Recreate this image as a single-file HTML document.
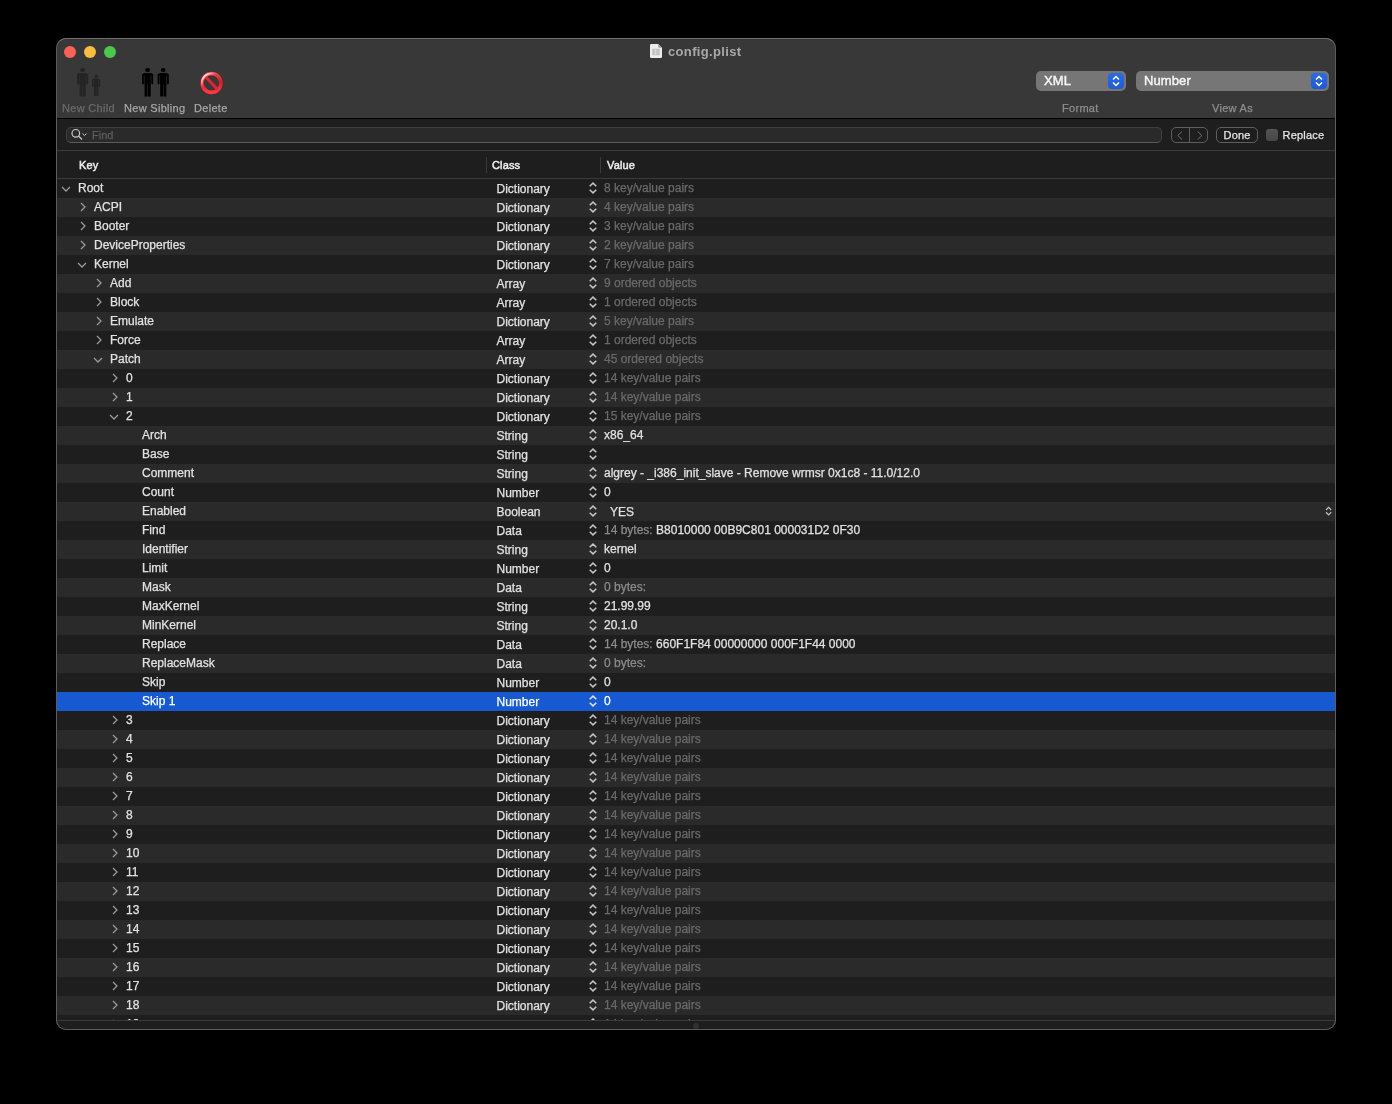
<!DOCTYPE html>
<html><head><meta charset="utf-8">
<style>
*{margin:0;padding:0;box-sizing:border-box}
html,body{width:1392px;height:1104px;background:#000;overflow:hidden;font-family:"Liberation Sans",sans-serif}
#win div{-webkit-text-stroke:0.25px currentColor}
#win{will-change:transform;position:absolute;left:56px;top:38px;width:1280px;height:992px;border-radius:10px;overflow:hidden;background:#1e1e1e}
#winb{position:absolute;left:56px;top:38px;width:1280px;height:992px;border-radius:10px;border:1px solid #5d5d5d;border-top-color:#717171;border-bottom-color:#5a5a5a;pointer-events:none}
.abs{position:absolute}
#tb{position:absolute;left:0;top:0;width:1280px;height:80px;background:#383838}
#tbl{position:absolute;left:0;top:80px;width:1280px;height:1px;background:#000}
.tl{position:absolute;top:8px;width:12px;height:12px;border-radius:50%}
.title{position:absolute;top:6px;left:612px;font-size:13px;letter-spacing:0.35px;font-weight:bold;color:#a8a8a8;line-height:16px;white-space:nowrap;-webkit-text-stroke:0 !important}
.tlab{position:absolute;top:64px;font-size:11px;letter-spacing:0.3px;line-height:12px;color:#a6a6a6;white-space:nowrap}
.pop{position:absolute;top:33px;height:20px;border-radius:5px;background:#767676}
.pop .t{position:absolute;left:8px;top:0.5px;font-size:13px;line-height:17px;color:#f4f4f4;white-space:nowrap;letter-spacing:0.1px;-webkit-text-stroke:0.45px currentColor !important}
.pop .b{position:absolute;right:2px;top:2px;width:16px;height:16px;border-radius:4px;background:linear-gradient(#2c6be4,#1f5ad6)}
.pop .b svg{display:block}
#find{position:absolute;left:0;top:81px;width:1280px;height:31px;background:#1e1e1e}
.sf{position:absolute;left:10px;top:89px;width:1096px;height:16px;border-radius:5px;background:#2a2a2a;border:1px solid #3e3e3e;border-bottom-color:#5a5a5a}
.btn{position:absolute;top:89px;height:16px;border-radius:5px;border:1px solid #5e5e5e;background:#1e1e1e}
.hline{position:absolute;left:0;width:1280px;height:1px}
.hd{position:absolute;top:121px;font-size:11px;font-weight:normal;color:#ececec;line-height:13px;white-space:nowrap;letter-spacing:0.15px;-webkit-text-stroke:0.5px currentColor !important}
.hsep{position:absolute;top:119px;width:1px;height:16px;background:#3a3a3a}
.row{position:absolute;left:0;width:1280px;height:19px}
.k{position:absolute;top:0;font-size:12px;line-height:19px;color:#e2e2e2;white-space:nowrap}
.k.sel{color:#fff}
.gray{color:#6a6a6a}
.dg{color:#8c8c8c}
.chr{position:absolute;top:4px;width:8px;height:10px}
.chd{position:absolute;top:6px;width:10px;height:8px}
.ch{display:block}
.st{position:absolute;top:1px;width:10px;height:15px}
.st svg{display:block}
.st2{position:absolute;top:3px}
.st2 svg{display:block}
</style></head><body>
<div id="win">
 <div id="tb"></div>
 <div id="tbl"></div>
 <div class="abs" style="left:0;top:1px;width:1280px;height:1px;background:#333"></div>
 <div class="tl" style="left:8px;background:#fc6058"></div>
 <div class="tl" style="left:28px;background:#f7bd3e"></div>
 <div class="tl" style="left:48px;background:#4bc94c"></div>
 <svg class="abs" style="left:594px;top:6px" width="12" height="14" viewBox="0 0 12 14"><path d="M1.3 0 L8.2 0 L12 3.8 L12 12.7 Q12 14 10.7 14 L1.3 14 Q0 14 0 12.7 L0 1.3 Q0 0 1.3 0 Z" fill="#ededed"/><path d="M8.2 0 L8.2 2.8 Q8.2 3.8 9.2 3.8 L12 3.8 Z" fill="#9c9c9c"/><rect x="2.2" y="4.8" width="7.6" height="6.4" rx="0.6" fill="#c4c4c4"/><rect x="5.2" y="4.8" width="1" height="6.4" fill="#dcdcdc"/></svg>
 <div class="title">config.plist</div>
 <svg class="abs" style="left:0;top:0" width="300" height="80">
  <g transform="translate(21,30) scale(1.0000)" fill="#242424"><ellipse cx="5.6" cy="2" rx="2.4" ry="1.95"/><rect x="0.9" y="5.3" width="9.4" height="2.2" rx="1"/><rect x="0" y="5.9" width="1.9" height="10.3" rx="0.6"/><rect x="9.3" y="5.9" width="1.9" height="10.3" rx="0.6"/><rect x="2.4" y="5.3" width="6.4" height="11.2"/><rect x="2.6" y="16" width="2.8" height="12.5"/><rect x="5.9" y="16" width="2.8" height="12.5"/></g>
  <g transform="translate(36,36.8) scale(0.7368)" fill="#242424"><ellipse cx="5.6" cy="2" rx="2.4" ry="1.95"/><rect x="0.9" y="5.3" width="9.4" height="2.2" rx="1"/><rect x="0" y="5.9" width="1.9" height="10.3" rx="0.6"/><rect x="9.3" y="5.9" width="1.9" height="10.3" rx="0.6"/><rect x="2.4" y="5.3" width="6.4" height="11.2"/><rect x="2.6" y="16" width="2.8" height="12.5"/><rect x="5.9" y="16" width="2.8" height="12.5"/></g>
  <g transform="translate(86,30) scale(1.0000)" fill="#000"><ellipse cx="5.6" cy="2" rx="2.4" ry="1.95"/><rect x="0.9" y="5.3" width="9.4" height="2.2" rx="1"/><rect x="0" y="5.9" width="1.9" height="10.3" rx="0.6"/><rect x="9.3" y="5.9" width="1.9" height="10.3" rx="0.6"/><rect x="2.4" y="5.3" width="6.4" height="11.2"/><rect x="2.6" y="16" width="2.8" height="12.5"/><rect x="5.9" y="16" width="2.8" height="12.5"/></g>
  <g transform="translate(101.6,30) scale(1.0000)" fill="#000"><ellipse cx="5.6" cy="2" rx="2.4" ry="1.95"/><rect x="0.9" y="5.3" width="9.4" height="2.2" rx="1"/><rect x="0" y="5.9" width="1.9" height="10.3" rx="0.6"/><rect x="9.3" y="5.9" width="1.9" height="10.3" rx="0.6"/><rect x="2.4" y="5.3" width="6.4" height="11.2"/><rect x="2.6" y="16" width="2.8" height="12.5"/><rect x="5.9" y="16" width="2.8" height="12.5"/></g>
  <defs><linearGradient id="rg" x1="0" y1="0" x2="0" y2="1"><stop offset="0" stop-color="#e8424b"/><stop offset="0.45" stop-color="#c9232d"/><stop offset="1" stop-color="#ff3945"/></linearGradient>
  <linearGradient id="hl" x1="0.1" y1="0.1" x2="0.8" y2="0.8"><stop offset="0" stop-color="#fff" stop-opacity="0.95"/><stop offset="0.4" stop-color="#fff" stop-opacity="0"/></linearGradient></defs>
  <circle cx="155.5" cy="45" r="9.4" fill="none" stroke="#7a0e14" stroke-width="4.6" opacity="0.55"/>
  <line x1="149.4" y1="38.599999999999994" x2="161.6" y2="51.400000000000006" stroke="#7a0e14" stroke-width="4.1" opacity="0.55"/>
  <circle cx="155.5" cy="45" r="9.4" fill="none" stroke="url(#rg)" stroke-width="3.7"/>
  <line x1="149.4" y1="38.599999999999994" x2="161.6" y2="51.400000000000006" stroke="#d42a34" stroke-width="3.2"/>
  <circle cx="155.5" cy="45" r="9.6" fill="none" stroke="url(#hl)" stroke-width="2"/>
 </svg>
 <div class="tlab" style="left:6px;color:#6a6a6a">New Child</div>
 <div class="tlab" style="left:68px">New Sibling</div>
 <div class="tlab" style="left:138px">Delete</div>
 <div class="pop" style="left:980px;width:90px"><div class="t">XML</div><div class="b"><svg width="16" height="16" viewBox="0 0 16 16"><path d="M5 6.5 L8 3.5 L11 6.5 M5 9.5 L8 12.5 L11 9.5" fill="none" stroke="#fff" stroke-width="1.5"/></svg></div></div>
 <div class="pop" style="left:1080px;width:193px"><div class="t">Number</div><div class="b"><svg width="16" height="16" viewBox="0 0 16 16"><path d="M5 6.5 L8 3.5 L11 6.5 M5 9.5 L8 12.5 L11 9.5" fill="none" stroke="#fff" stroke-width="1.5"/></svg></div></div>
 <div class="tlab" style="left:1006px;color:#8e8e8e">Format</div>
 <div class="tlab" style="left:1156px;color:#8e8e8e">View As</div>
 <div id="find"></div>
 <div class="sf"></div>
 <svg class="abs" style="left:14px;top:90px" width="20" height="14" viewBox="0 0 20 14"><circle cx="5.8" cy="5.3" r="3.8" fill="none" stroke="#c8c8c8" stroke-width="1.2"/><line x1="8.5" y1="8" x2="12" y2="11.5" stroke="#c8c8c8" stroke-width="1.3"/><path d="M12.5 5.5 L14.5 7.5 L16.5 5.5" fill="none" stroke="#c8c8c8" stroke-width="1"/></svg>
 <div class="abs" style="left:36px;top:91px;font-size:11px;line-height:13px;color:#5e5e5e">Find</div>
 <div class="btn" style="left:1115px;width:37px"></div>
 <div class="abs" style="left:1133px;top:90px;width:1px;height:14px;background:#5e5e5e"></div>
 <svg class="abs" style="left:1116px;top:92px" width="36" height="12"><path d="M10 1.5 L5.8 5.5 L10 9.5" fill="none" stroke="#707070" stroke-width="1"/><path d="M25.7 1.5 L29.9 5.5 L25.7 9.5" fill="none" stroke="#707070" stroke-width="1"/></svg>
 <div class="btn" style="left:1160px;width:42px"></div>
 <div class="abs" style="left:1167.5px;top:91px;font-size:11px;line-height:13px;color:#e6e6e6;letter-spacing:0.2px">Done</div>
 <div class="abs" style="left:1210px;top:91px;width:12px;height:12px;border-radius:3px;background:linear-gradient(#555,#464646)"></div>
 <div class="abs" style="left:1226.5px;top:91px;font-size:11px;line-height:13px;color:#e6e6e6;letter-spacing:0.2px">Replace</div>
 <div class="hline" style="top:112px;background:#3c3c3c"></div>
 <div class="hd" style="left:23px">Key</div>
 <div class="hsep" style="left:430px"></div>
 <div class="hd" style="left:436px">Class</div>
 <div class="hsep" style="left:544px"></div>
 <div class="hd" style="left:551px">Value</div>
 <div class="hline" style="top:140px;background:#3a3a3a"></div>
<div class="row" style="top:141px;background:#1e1e1e"><div class="chd" style="left:5px"><svg class="ch" width="10" height="8" viewBox="0 0 10 8"><path d="M1 2 L5 6 L9 2" fill="none" stroke="#9a9a9a" stroke-width="1.3"/></svg></div><div class="k" style="left:22px">Root</div><div class="k" style="left:440.5px;top:1px">Dictionary</div><div class="st" style="left:532px"><svg width="10" height="15" viewBox="0 0 10 15"><path d="M1.7 6.3 L5 3.1 L8.3 6.3 M1.7 9.7 L5 12.9 L8.3 9.7" fill="none" stroke="#c4c4c4" stroke-width="1.5"/></svg></div><div class="k gray" style="left:548px">8 key/value pairs</div></div>
<div class="row" style="top:160px;background:#2a2a2a"><div class="chr" style="left:23px"><svg class="ch" width="8" height="10" viewBox="0 0 8 10"><path d="M2 1 L6 5 L2 9" fill="none" stroke="#9a9a9a" stroke-width="1.3"/></svg></div><div class="k" style="left:38px">ACPI</div><div class="k" style="left:440.5px;top:1px">Dictionary</div><div class="st" style="left:532px"><svg width="10" height="15" viewBox="0 0 10 15"><path d="M1.7 6.3 L5 3.1 L8.3 6.3 M1.7 9.7 L5 12.9 L8.3 9.7" fill="none" stroke="#c4c4c4" stroke-width="1.5"/></svg></div><div class="k gray" style="left:548px">4 key/value pairs</div></div>
<div class="row" style="top:179px;background:#1e1e1e"><div class="chr" style="left:23px"><svg class="ch" width="8" height="10" viewBox="0 0 8 10"><path d="M2 1 L6 5 L2 9" fill="none" stroke="#9a9a9a" stroke-width="1.3"/></svg></div><div class="k" style="left:38px">Booter</div><div class="k" style="left:440.5px;top:1px">Dictionary</div><div class="st" style="left:532px"><svg width="10" height="15" viewBox="0 0 10 15"><path d="M1.7 6.3 L5 3.1 L8.3 6.3 M1.7 9.7 L5 12.9 L8.3 9.7" fill="none" stroke="#c4c4c4" stroke-width="1.5"/></svg></div><div class="k gray" style="left:548px">3 key/value pairs</div></div>
<div class="row" style="top:198px;background:#2a2a2a"><div class="chr" style="left:23px"><svg class="ch" width="8" height="10" viewBox="0 0 8 10"><path d="M2 1 L6 5 L2 9" fill="none" stroke="#9a9a9a" stroke-width="1.3"/></svg></div><div class="k" style="left:38px">DeviceProperties</div><div class="k" style="left:440.5px;top:1px">Dictionary</div><div class="st" style="left:532px"><svg width="10" height="15" viewBox="0 0 10 15"><path d="M1.7 6.3 L5 3.1 L8.3 6.3 M1.7 9.7 L5 12.9 L8.3 9.7" fill="none" stroke="#c4c4c4" stroke-width="1.5"/></svg></div><div class="k gray" style="left:548px">2 key/value pairs</div></div>
<div class="row" style="top:217px;background:#1e1e1e"><div class="chd" style="left:21px"><svg class="ch" width="10" height="8" viewBox="0 0 10 8"><path d="M1 2 L5 6 L9 2" fill="none" stroke="#9a9a9a" stroke-width="1.3"/></svg></div><div class="k" style="left:38px">Kernel</div><div class="k" style="left:440.5px;top:1px">Dictionary</div><div class="st" style="left:532px"><svg width="10" height="15" viewBox="0 0 10 15"><path d="M1.7 6.3 L5 3.1 L8.3 6.3 M1.7 9.7 L5 12.9 L8.3 9.7" fill="none" stroke="#c4c4c4" stroke-width="1.5"/></svg></div><div class="k gray" style="left:548px">7 key/value pairs</div></div>
<div class="row" style="top:236px;background:#2a2a2a"><div class="chr" style="left:39px"><svg class="ch" width="8" height="10" viewBox="0 0 8 10"><path d="M2 1 L6 5 L2 9" fill="none" stroke="#9a9a9a" stroke-width="1.3"/></svg></div><div class="k" style="left:54px">Add</div><div class="k" style="left:440.5px;top:1px">Array</div><div class="st" style="left:532px"><svg width="10" height="15" viewBox="0 0 10 15"><path d="M1.7 6.3 L5 3.1 L8.3 6.3 M1.7 9.7 L5 12.9 L8.3 9.7" fill="none" stroke="#c4c4c4" stroke-width="1.5"/></svg></div><div class="k gray" style="left:548px">9 ordered objects</div></div>
<div class="row" style="top:255px;background:#1e1e1e"><div class="chr" style="left:39px"><svg class="ch" width="8" height="10" viewBox="0 0 8 10"><path d="M2 1 L6 5 L2 9" fill="none" stroke="#9a9a9a" stroke-width="1.3"/></svg></div><div class="k" style="left:54px">Block</div><div class="k" style="left:440.5px;top:1px">Array</div><div class="st" style="left:532px"><svg width="10" height="15" viewBox="0 0 10 15"><path d="M1.7 6.3 L5 3.1 L8.3 6.3 M1.7 9.7 L5 12.9 L8.3 9.7" fill="none" stroke="#c4c4c4" stroke-width="1.5"/></svg></div><div class="k gray" style="left:548px">1 ordered objects</div></div>
<div class="row" style="top:274px;background:#2a2a2a"><div class="chr" style="left:39px"><svg class="ch" width="8" height="10" viewBox="0 0 8 10"><path d="M2 1 L6 5 L2 9" fill="none" stroke="#9a9a9a" stroke-width="1.3"/></svg></div><div class="k" style="left:54px">Emulate</div><div class="k" style="left:440.5px;top:1px">Dictionary</div><div class="st" style="left:532px"><svg width="10" height="15" viewBox="0 0 10 15"><path d="M1.7 6.3 L5 3.1 L8.3 6.3 M1.7 9.7 L5 12.9 L8.3 9.7" fill="none" stroke="#c4c4c4" stroke-width="1.5"/></svg></div><div class="k gray" style="left:548px">5 key/value pairs</div></div>
<div class="row" style="top:293px;background:#1e1e1e"><div class="chr" style="left:39px"><svg class="ch" width="8" height="10" viewBox="0 0 8 10"><path d="M2 1 L6 5 L2 9" fill="none" stroke="#9a9a9a" stroke-width="1.3"/></svg></div><div class="k" style="left:54px">Force</div><div class="k" style="left:440.5px;top:1px">Array</div><div class="st" style="left:532px"><svg width="10" height="15" viewBox="0 0 10 15"><path d="M1.7 6.3 L5 3.1 L8.3 6.3 M1.7 9.7 L5 12.9 L8.3 9.7" fill="none" stroke="#c4c4c4" stroke-width="1.5"/></svg></div><div class="k gray" style="left:548px">1 ordered objects</div></div>
<div class="row" style="top:312px;background:#2a2a2a"><div class="chd" style="left:37px"><svg class="ch" width="10" height="8" viewBox="0 0 10 8"><path d="M1 2 L5 6 L9 2" fill="none" stroke="#9a9a9a" stroke-width="1.3"/></svg></div><div class="k" style="left:54px">Patch</div><div class="k" style="left:440.5px;top:1px">Array</div><div class="st" style="left:532px"><svg width="10" height="15" viewBox="0 0 10 15"><path d="M1.7 6.3 L5 3.1 L8.3 6.3 M1.7 9.7 L5 12.9 L8.3 9.7" fill="none" stroke="#c4c4c4" stroke-width="1.5"/></svg></div><div class="k gray" style="left:548px">45 ordered objects</div></div>
<div class="row" style="top:331px;background:#1e1e1e"><div class="chr" style="left:55px"><svg class="ch" width="8" height="10" viewBox="0 0 8 10"><path d="M2 1 L6 5 L2 9" fill="none" stroke="#9a9a9a" stroke-width="1.3"/></svg></div><div class="k" style="left:70px">0</div><div class="k" style="left:440.5px;top:1px">Dictionary</div><div class="st" style="left:532px"><svg width="10" height="15" viewBox="0 0 10 15"><path d="M1.7 6.3 L5 3.1 L8.3 6.3 M1.7 9.7 L5 12.9 L8.3 9.7" fill="none" stroke="#c4c4c4" stroke-width="1.5"/></svg></div><div class="k gray" style="left:548px">14 key/value pairs</div></div>
<div class="row" style="top:350px;background:#2a2a2a"><div class="chr" style="left:55px"><svg class="ch" width="8" height="10" viewBox="0 0 8 10"><path d="M2 1 L6 5 L2 9" fill="none" stroke="#9a9a9a" stroke-width="1.3"/></svg></div><div class="k" style="left:70px">1</div><div class="k" style="left:440.5px;top:1px">Dictionary</div><div class="st" style="left:532px"><svg width="10" height="15" viewBox="0 0 10 15"><path d="M1.7 6.3 L5 3.1 L8.3 6.3 M1.7 9.7 L5 12.9 L8.3 9.7" fill="none" stroke="#c4c4c4" stroke-width="1.5"/></svg></div><div class="k gray" style="left:548px">14 key/value pairs</div></div>
<div class="row" style="top:369px;background:#1e1e1e"><div class="chd" style="left:53px"><svg class="ch" width="10" height="8" viewBox="0 0 10 8"><path d="M1 2 L5 6 L9 2" fill="none" stroke="#9a9a9a" stroke-width="1.3"/></svg></div><div class="k" style="left:70px">2</div><div class="k" style="left:440.5px;top:1px">Dictionary</div><div class="st" style="left:532px"><svg width="10" height="15" viewBox="0 0 10 15"><path d="M1.7 6.3 L5 3.1 L8.3 6.3 M1.7 9.7 L5 12.9 L8.3 9.7" fill="none" stroke="#c4c4c4" stroke-width="1.5"/></svg></div><div class="k gray" style="left:548px">15 key/value pairs</div></div>
<div class="row" style="top:388px;background:#2a2a2a"><div class="k" style="left:86px">Arch</div><div class="k" style="left:440.5px;top:1px">String</div><div class="st" style="left:532px"><svg width="10" height="15" viewBox="0 0 10 15"><path d="M1.7 6.3 L5 3.1 L8.3 6.3 M1.7 9.7 L5 12.9 L8.3 9.7" fill="none" stroke="#c4c4c4" stroke-width="1.5"/></svg></div><div class="k" style="left:548px">x86_64</div></div>
<div class="row" style="top:407px;background:#1e1e1e"><div class="k" style="left:86px">Base</div><div class="k" style="left:440.5px;top:1px">String</div><div class="st" style="left:532px"><svg width="10" height="15" viewBox="0 0 10 15"><path d="M1.7 6.3 L5 3.1 L8.3 6.3 M1.7 9.7 L5 12.9 L8.3 9.7" fill="none" stroke="#c4c4c4" stroke-width="1.5"/></svg></div><div class="k" style="left:548px"></div></div>
<div class="row" style="top:426px;background:#2a2a2a"><div class="k" style="left:86px">Comment</div><div class="k" style="left:440.5px;top:1px">String</div><div class="st" style="left:532px"><svg width="10" height="15" viewBox="0 0 10 15"><path d="M1.7 6.3 L5 3.1 L8.3 6.3 M1.7 9.7 L5 12.9 L8.3 9.7" fill="none" stroke="#c4c4c4" stroke-width="1.5"/></svg></div><div class="k" style="left:548px">algrey - _i386_init_slave - Remove wrmsr 0x1c8 - 11.0/12.0</div></div>
<div class="row" style="top:445px;background:#1e1e1e"><div class="k" style="left:86px">Count</div><div class="k" style="left:440.5px;top:1px">Number</div><div class="st" style="left:532px"><svg width="10" height="15" viewBox="0 0 10 15"><path d="M1.7 6.3 L5 3.1 L8.3 6.3 M1.7 9.7 L5 12.9 L8.3 9.7" fill="none" stroke="#c4c4c4" stroke-width="1.5"/></svg></div><div class="k" style="left:548px">0</div></div>
<div class="row" style="top:464px;background:#2a2a2a"><div class="k" style="left:86px">Enabled</div><div class="k" style="left:440.5px;top:1px">Boolean</div><div class="st" style="left:532px"><svg width="10" height="15" viewBox="0 0 10 15"><path d="M1.7 6.3 L5 3.1 L8.3 6.3 M1.7 9.7 L5 12.9 L8.3 9.7" fill="none" stroke="#c4c4c4" stroke-width="1.5"/></svg></div><div class="k" style="left:554px;top:1px">YES</div><div class="st2" style="left:1268px"><svg width="10" height="13" viewBox="0 0 10 13"><path d="M2 5 L4.6 2.4 L7.2 5 M2 7.3 L4.6 9.9 L7.2 7.3" fill="none" stroke="#c0c0c0" stroke-width="1.25"/></svg></div></div>
<div class="row" style="top:483px;background:#1e1e1e"><div class="k" style="left:86px">Find</div><div class="k" style="left:440.5px;top:1px">Data</div><div class="st" style="left:532px"><svg width="10" height="15" viewBox="0 0 10 15"><path d="M1.7 6.3 L5 3.1 L8.3 6.3 M1.7 9.7 L5 12.9 L8.3 9.7" fill="none" stroke="#c4c4c4" stroke-width="1.5"/></svg></div><div class="k" style="left:548px"><span class="dg">14 bytes: </span>B8010000 00B9C801 000031D2 0F30</div></div>
<div class="row" style="top:502px;background:#2a2a2a"><div class="k" style="left:86px">Identifier</div><div class="k" style="left:440.5px;top:1px">String</div><div class="st" style="left:532px"><svg width="10" height="15" viewBox="0 0 10 15"><path d="M1.7 6.3 L5 3.1 L8.3 6.3 M1.7 9.7 L5 12.9 L8.3 9.7" fill="none" stroke="#c4c4c4" stroke-width="1.5"/></svg></div><div class="k" style="left:548px">kernel</div></div>
<div class="row" style="top:521px;background:#1e1e1e"><div class="k" style="left:86px">Limit</div><div class="k" style="left:440.5px;top:1px">Number</div><div class="st" style="left:532px"><svg width="10" height="15" viewBox="0 0 10 15"><path d="M1.7 6.3 L5 3.1 L8.3 6.3 M1.7 9.7 L5 12.9 L8.3 9.7" fill="none" stroke="#c4c4c4" stroke-width="1.5"/></svg></div><div class="k" style="left:548px">0</div></div>
<div class="row" style="top:540px;background:#2a2a2a"><div class="k" style="left:86px">Mask</div><div class="k" style="left:440.5px;top:1px">Data</div><div class="st" style="left:532px"><svg width="10" height="15" viewBox="0 0 10 15"><path d="M1.7 6.3 L5 3.1 L8.3 6.3 M1.7 9.7 L5 12.9 L8.3 9.7" fill="none" stroke="#c4c4c4" stroke-width="1.5"/></svg></div><div class="k" style="left:548px"><span class="dg">0 bytes:</span></div></div>
<div class="row" style="top:559px;background:#1e1e1e"><div class="k" style="left:86px">MaxKernel</div><div class="k" style="left:440.5px;top:1px">String</div><div class="st" style="left:532px"><svg width="10" height="15" viewBox="0 0 10 15"><path d="M1.7 6.3 L5 3.1 L8.3 6.3 M1.7 9.7 L5 12.9 L8.3 9.7" fill="none" stroke="#c4c4c4" stroke-width="1.5"/></svg></div><div class="k" style="left:548px">21.99.99</div></div>
<div class="row" style="top:578px;background:#2a2a2a"><div class="k" style="left:86px">MinKernel</div><div class="k" style="left:440.5px;top:1px">String</div><div class="st" style="left:532px"><svg width="10" height="15" viewBox="0 0 10 15"><path d="M1.7 6.3 L5 3.1 L8.3 6.3 M1.7 9.7 L5 12.9 L8.3 9.7" fill="none" stroke="#c4c4c4" stroke-width="1.5"/></svg></div><div class="k" style="left:548px">20.1.0</div></div>
<div class="row" style="top:597px;background:#1e1e1e"><div class="k" style="left:86px">Replace</div><div class="k" style="left:440.5px;top:1px">Data</div><div class="st" style="left:532px"><svg width="10" height="15" viewBox="0 0 10 15"><path d="M1.7 6.3 L5 3.1 L8.3 6.3 M1.7 9.7 L5 12.9 L8.3 9.7" fill="none" stroke="#c4c4c4" stroke-width="1.5"/></svg></div><div class="k" style="left:548px"><span class="dg">14 bytes: </span>660F1F84 00000000 000F1F44 0000</div></div>
<div class="row" style="top:616px;background:#2a2a2a"><div class="k" style="left:86px">ReplaceMask</div><div class="k" style="left:440.5px;top:1px">Data</div><div class="st" style="left:532px"><svg width="10" height="15" viewBox="0 0 10 15"><path d="M1.7 6.3 L5 3.1 L8.3 6.3 M1.7 9.7 L5 12.9 L8.3 9.7" fill="none" stroke="#c4c4c4" stroke-width="1.5"/></svg></div><div class="k" style="left:548px"><span class="dg">0 bytes:</span></div></div>
<div class="row" style="top:635px;background:#1e1e1e"><div class="k" style="left:86px">Skip</div><div class="k" style="left:440.5px;top:1px">Number</div><div class="st" style="left:532px"><svg width="10" height="15" viewBox="0 0 10 15"><path d="M1.7 6.3 L5 3.1 L8.3 6.3 M1.7 9.7 L5 12.9 L8.3 9.7" fill="none" stroke="#c4c4c4" stroke-width="1.5"/></svg></div><div class="k" style="left:548px">0</div></div>
<div class="row" style="top:654px;background:#1759d1"><div class="k sel" style="left:86px">Skip 1</div><div class="k sel" style="left:440.5px;top:1px">Number</div><div class="st" style="left:532px"><svg width="10" height="15" viewBox="0 0 10 15"><path d="M1.7 6.3 L5 3.1 L8.3 6.3 M1.7 9.7 L5 12.9 L8.3 9.7" fill="none" stroke="#e0e0e0" stroke-width="1.5"/></svg></div><div class="k sel" style="left:548px">0</div></div>
<div class="row" style="top:673px;background:#1e1e1e"><div class="chr" style="left:55px"><svg class="ch" width="8" height="10" viewBox="0 0 8 10"><path d="M2 1 L6 5 L2 9" fill="none" stroke="#9a9a9a" stroke-width="1.3"/></svg></div><div class="k" style="left:70px">3</div><div class="k" style="left:440.5px;top:1px">Dictionary</div><div class="st" style="left:532px"><svg width="10" height="15" viewBox="0 0 10 15"><path d="M1.7 6.3 L5 3.1 L8.3 6.3 M1.7 9.7 L5 12.9 L8.3 9.7" fill="none" stroke="#c4c4c4" stroke-width="1.5"/></svg></div><div class="k gray" style="left:548px">14 key/value pairs</div></div>
<div class="row" style="top:692px;background:#2a2a2a"><div class="chr" style="left:55px"><svg class="ch" width="8" height="10" viewBox="0 0 8 10"><path d="M2 1 L6 5 L2 9" fill="none" stroke="#9a9a9a" stroke-width="1.3"/></svg></div><div class="k" style="left:70px">4</div><div class="k" style="left:440.5px;top:1px">Dictionary</div><div class="st" style="left:532px"><svg width="10" height="15" viewBox="0 0 10 15"><path d="M1.7 6.3 L5 3.1 L8.3 6.3 M1.7 9.7 L5 12.9 L8.3 9.7" fill="none" stroke="#c4c4c4" stroke-width="1.5"/></svg></div><div class="k gray" style="left:548px">14 key/value pairs</div></div>
<div class="row" style="top:711px;background:#1e1e1e"><div class="chr" style="left:55px"><svg class="ch" width="8" height="10" viewBox="0 0 8 10"><path d="M2 1 L6 5 L2 9" fill="none" stroke="#9a9a9a" stroke-width="1.3"/></svg></div><div class="k" style="left:70px">5</div><div class="k" style="left:440.5px;top:1px">Dictionary</div><div class="st" style="left:532px"><svg width="10" height="15" viewBox="0 0 10 15"><path d="M1.7 6.3 L5 3.1 L8.3 6.3 M1.7 9.7 L5 12.9 L8.3 9.7" fill="none" stroke="#c4c4c4" stroke-width="1.5"/></svg></div><div class="k gray" style="left:548px">14 key/value pairs</div></div>
<div class="row" style="top:730px;background:#2a2a2a"><div class="chr" style="left:55px"><svg class="ch" width="8" height="10" viewBox="0 0 8 10"><path d="M2 1 L6 5 L2 9" fill="none" stroke="#9a9a9a" stroke-width="1.3"/></svg></div><div class="k" style="left:70px">6</div><div class="k" style="left:440.5px;top:1px">Dictionary</div><div class="st" style="left:532px"><svg width="10" height="15" viewBox="0 0 10 15"><path d="M1.7 6.3 L5 3.1 L8.3 6.3 M1.7 9.7 L5 12.9 L8.3 9.7" fill="none" stroke="#c4c4c4" stroke-width="1.5"/></svg></div><div class="k gray" style="left:548px">14 key/value pairs</div></div>
<div class="row" style="top:749px;background:#1e1e1e"><div class="chr" style="left:55px"><svg class="ch" width="8" height="10" viewBox="0 0 8 10"><path d="M2 1 L6 5 L2 9" fill="none" stroke="#9a9a9a" stroke-width="1.3"/></svg></div><div class="k" style="left:70px">7</div><div class="k" style="left:440.5px;top:1px">Dictionary</div><div class="st" style="left:532px"><svg width="10" height="15" viewBox="0 0 10 15"><path d="M1.7 6.3 L5 3.1 L8.3 6.3 M1.7 9.7 L5 12.9 L8.3 9.7" fill="none" stroke="#c4c4c4" stroke-width="1.5"/></svg></div><div class="k gray" style="left:548px">14 key/value pairs</div></div>
<div class="row" style="top:768px;background:#2a2a2a"><div class="chr" style="left:55px"><svg class="ch" width="8" height="10" viewBox="0 0 8 10"><path d="M2 1 L6 5 L2 9" fill="none" stroke="#9a9a9a" stroke-width="1.3"/></svg></div><div class="k" style="left:70px">8</div><div class="k" style="left:440.5px;top:1px">Dictionary</div><div class="st" style="left:532px"><svg width="10" height="15" viewBox="0 0 10 15"><path d="M1.7 6.3 L5 3.1 L8.3 6.3 M1.7 9.7 L5 12.9 L8.3 9.7" fill="none" stroke="#c4c4c4" stroke-width="1.5"/></svg></div><div class="k gray" style="left:548px">14 key/value pairs</div></div>
<div class="row" style="top:787px;background:#1e1e1e"><div class="chr" style="left:55px"><svg class="ch" width="8" height="10" viewBox="0 0 8 10"><path d="M2 1 L6 5 L2 9" fill="none" stroke="#9a9a9a" stroke-width="1.3"/></svg></div><div class="k" style="left:70px">9</div><div class="k" style="left:440.5px;top:1px">Dictionary</div><div class="st" style="left:532px"><svg width="10" height="15" viewBox="0 0 10 15"><path d="M1.7 6.3 L5 3.1 L8.3 6.3 M1.7 9.7 L5 12.9 L8.3 9.7" fill="none" stroke="#c4c4c4" stroke-width="1.5"/></svg></div><div class="k gray" style="left:548px">14 key/value pairs</div></div>
<div class="row" style="top:806px;background:#2a2a2a"><div class="chr" style="left:55px"><svg class="ch" width="8" height="10" viewBox="0 0 8 10"><path d="M2 1 L6 5 L2 9" fill="none" stroke="#9a9a9a" stroke-width="1.3"/></svg></div><div class="k" style="left:70px">10</div><div class="k" style="left:440.5px;top:1px">Dictionary</div><div class="st" style="left:532px"><svg width="10" height="15" viewBox="0 0 10 15"><path d="M1.7 6.3 L5 3.1 L8.3 6.3 M1.7 9.7 L5 12.9 L8.3 9.7" fill="none" stroke="#c4c4c4" stroke-width="1.5"/></svg></div><div class="k gray" style="left:548px">14 key/value pairs</div></div>
<div class="row" style="top:825px;background:#1e1e1e"><div class="chr" style="left:55px"><svg class="ch" width="8" height="10" viewBox="0 0 8 10"><path d="M2 1 L6 5 L2 9" fill="none" stroke="#9a9a9a" stroke-width="1.3"/></svg></div><div class="k" style="left:70px">11</div><div class="k" style="left:440.5px;top:1px">Dictionary</div><div class="st" style="left:532px"><svg width="10" height="15" viewBox="0 0 10 15"><path d="M1.7 6.3 L5 3.1 L8.3 6.3 M1.7 9.7 L5 12.9 L8.3 9.7" fill="none" stroke="#c4c4c4" stroke-width="1.5"/></svg></div><div class="k gray" style="left:548px">14 key/value pairs</div></div>
<div class="row" style="top:844px;background:#2a2a2a"><div class="chr" style="left:55px"><svg class="ch" width="8" height="10" viewBox="0 0 8 10"><path d="M2 1 L6 5 L2 9" fill="none" stroke="#9a9a9a" stroke-width="1.3"/></svg></div><div class="k" style="left:70px">12</div><div class="k" style="left:440.5px;top:1px">Dictionary</div><div class="st" style="left:532px"><svg width="10" height="15" viewBox="0 0 10 15"><path d="M1.7 6.3 L5 3.1 L8.3 6.3 M1.7 9.7 L5 12.9 L8.3 9.7" fill="none" stroke="#c4c4c4" stroke-width="1.5"/></svg></div><div class="k gray" style="left:548px">14 key/value pairs</div></div>
<div class="row" style="top:863px;background:#1e1e1e"><div class="chr" style="left:55px"><svg class="ch" width="8" height="10" viewBox="0 0 8 10"><path d="M2 1 L6 5 L2 9" fill="none" stroke="#9a9a9a" stroke-width="1.3"/></svg></div><div class="k" style="left:70px">13</div><div class="k" style="left:440.5px;top:1px">Dictionary</div><div class="st" style="left:532px"><svg width="10" height="15" viewBox="0 0 10 15"><path d="M1.7 6.3 L5 3.1 L8.3 6.3 M1.7 9.7 L5 12.9 L8.3 9.7" fill="none" stroke="#c4c4c4" stroke-width="1.5"/></svg></div><div class="k gray" style="left:548px">14 key/value pairs</div></div>
<div class="row" style="top:882px;background:#2a2a2a"><div class="chr" style="left:55px"><svg class="ch" width="8" height="10" viewBox="0 0 8 10"><path d="M2 1 L6 5 L2 9" fill="none" stroke="#9a9a9a" stroke-width="1.3"/></svg></div><div class="k" style="left:70px">14</div><div class="k" style="left:440.5px;top:1px">Dictionary</div><div class="st" style="left:532px"><svg width="10" height="15" viewBox="0 0 10 15"><path d="M1.7 6.3 L5 3.1 L8.3 6.3 M1.7 9.7 L5 12.9 L8.3 9.7" fill="none" stroke="#c4c4c4" stroke-width="1.5"/></svg></div><div class="k gray" style="left:548px">14 key/value pairs</div></div>
<div class="row" style="top:901px;background:#1e1e1e"><div class="chr" style="left:55px"><svg class="ch" width="8" height="10" viewBox="0 0 8 10"><path d="M2 1 L6 5 L2 9" fill="none" stroke="#9a9a9a" stroke-width="1.3"/></svg></div><div class="k" style="left:70px">15</div><div class="k" style="left:440.5px;top:1px">Dictionary</div><div class="st" style="left:532px"><svg width="10" height="15" viewBox="0 0 10 15"><path d="M1.7 6.3 L5 3.1 L8.3 6.3 M1.7 9.7 L5 12.9 L8.3 9.7" fill="none" stroke="#c4c4c4" stroke-width="1.5"/></svg></div><div class="k gray" style="left:548px">14 key/value pairs</div></div>
<div class="row" style="top:920px;background:#2a2a2a"><div class="chr" style="left:55px"><svg class="ch" width="8" height="10" viewBox="0 0 8 10"><path d="M2 1 L6 5 L2 9" fill="none" stroke="#9a9a9a" stroke-width="1.3"/></svg></div><div class="k" style="left:70px">16</div><div class="k" style="left:440.5px;top:1px">Dictionary</div><div class="st" style="left:532px"><svg width="10" height="15" viewBox="0 0 10 15"><path d="M1.7 6.3 L5 3.1 L8.3 6.3 M1.7 9.7 L5 12.9 L8.3 9.7" fill="none" stroke="#c4c4c4" stroke-width="1.5"/></svg></div><div class="k gray" style="left:548px">14 key/value pairs</div></div>
<div class="row" style="top:939px;background:#1e1e1e"><div class="chr" style="left:55px"><svg class="ch" width="8" height="10" viewBox="0 0 8 10"><path d="M2 1 L6 5 L2 9" fill="none" stroke="#9a9a9a" stroke-width="1.3"/></svg></div><div class="k" style="left:70px">17</div><div class="k" style="left:440.5px;top:1px">Dictionary</div><div class="st" style="left:532px"><svg width="10" height="15" viewBox="0 0 10 15"><path d="M1.7 6.3 L5 3.1 L8.3 6.3 M1.7 9.7 L5 12.9 L8.3 9.7" fill="none" stroke="#c4c4c4" stroke-width="1.5"/></svg></div><div class="k gray" style="left:548px">14 key/value pairs</div></div>
<div class="row" style="top:958px;background:#2a2a2a"><div class="chr" style="left:55px"><svg class="ch" width="8" height="10" viewBox="0 0 8 10"><path d="M2 1 L6 5 L2 9" fill="none" stroke="#9a9a9a" stroke-width="1.3"/></svg></div><div class="k" style="left:70px">18</div><div class="k" style="left:440.5px;top:1px">Dictionary</div><div class="st" style="left:532px"><svg width="10" height="15" viewBox="0 0 10 15"><path d="M1.7 6.3 L5 3.1 L8.3 6.3 M1.7 9.7 L5 12.9 L8.3 9.7" fill="none" stroke="#c4c4c4" stroke-width="1.5"/></svg></div><div class="k gray" style="left:548px">14 key/value pairs</div></div>
<div class="row" style="top:977px;background:#1e1e1e"><div class="chr" style="left:55px"><svg class="ch" width="8" height="10" viewBox="0 0 8 10"><path d="M2 1 L6 5 L2 9" fill="none" stroke="#9a9a9a" stroke-width="1.3"/></svg></div><div class="k" style="left:70px">19</div><div class="k" style="left:440.5px;top:1px">Dictionary</div><div class="st" style="left:532px"><svg width="10" height="15" viewBox="0 0 10 15"><path d="M1.7 6.3 L5 3.1 L8.3 6.3 M1.7 9.7 L5 12.9 L8.3 9.7" fill="none" stroke="#c4c4c4" stroke-width="1.5"/></svg></div><div class="k gray" style="left:548px">14 key/value pairs</div></div>
 <div class="hline" style="top:982px;background:#3a3a3a"></div>
 <div class="abs" style="left:0;top:983px;width:1280px;height:20px;background:#1e1e1e"></div>
 <div class="abs" style="left:636.5px;top:985px;width:6px;height:6px;border-radius:50%;background:#323232"></div>
</div>
<div id="winb"></div>
</body></html>
